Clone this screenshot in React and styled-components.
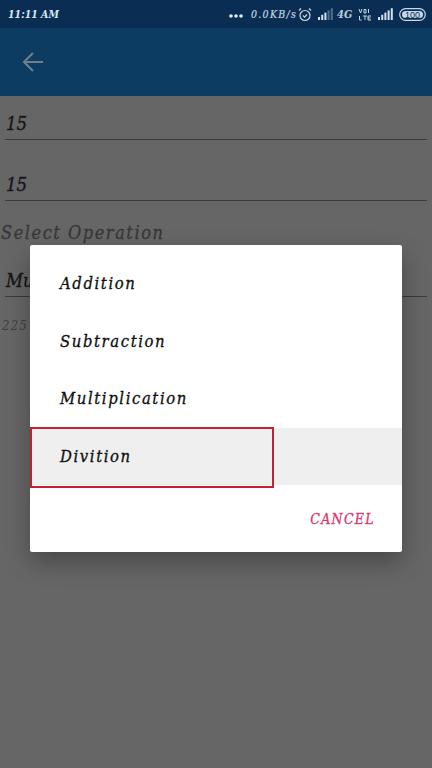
import React from "react";
import styled, { createGlobalStyle } from "styled-components";

const Global = createGlobalStyle`
  html, body { margin: 0; padding: 0; background: #666; }
  body { font-family: "DejaVu Serif Condensed", "DejaVu Serif", "Liberation Serif", serif; font-style: italic; }
`;
const Screen = styled.div`
  position: relative; width: 432px; height: 768px; overflow: hidden; background: #666666;
`;
const StatusBar = styled.div`
  height: 28px; background: #0a2d53; display: flex; align-items: center;
  justify-content: space-between; padding: 0 6px 0 8px; box-sizing: border-box;
`;
const Time = styled.span`
  font-size: 10.5px; letter-spacing: 0px; color: #dce8f2; font-weight: bold;
`;
const StatusRight = styled.div`
  display: flex; align-items: center;
`;
const Speed = styled.span`
  font-size: 10.5px; letter-spacing: 1.3px; color: #c3d3e2; -webkit-text-stroke: 0.2px #c3d3e2;
  margin: 0 3px 0 8px; width: 44px; white-space: nowrap;
`;
const NetLabel = styled.span`
  font-size: 11px; font-weight: bold; color: #b9cbdc; margin: 0 8px 0 3px; width: 13px;
`;
const AppBar = styled.div`
  height: 68px; background: #0d3c62; display: flex; align-items: center; padding-left: 22px;
`;
const Content = styled.div`
  display: flex; flex-direction: column; padding: 0 5px;
`;
const Field = styled.div`
  height: ${p => p.$h}px; box-sizing: border-box; border-bottom: 1px solid #3a3a3a;
  display: flex; align-items: flex-end; padding: 0 0 3px 1px;
  font-size: 18.5px; line-height: 24px; color: #161616; -webkit-text-stroke: 0.35px #161616;
`;
const Label = styled.div`
  margin: 20px 0 0 -4px; font-size: 18px; line-height: 24px; letter-spacing: 1.55px; color: #383838;
  -webkit-text-stroke: 0.3px #383838;
`;
const Result = styled.div`
  margin: 20px 0 0 -3px; font-size: 13px; line-height: 18px; letter-spacing: 1.2px; color: #3f3f3f;
`;
const Dialog = styled.div`
  position: absolute; left: 30px; top: 245px; width: 372px; height: 307px; background: #fff;
  border-radius: 2px; box-shadow: 0 10px 24px rgba(0,0,0,.3);
  display: flex; flex-direction: column; padding-top: 10px; box-sizing: border-box;
`;
const Item = styled.div`
  height: 57.5px; display: flex; align-items: center; padding-left: 30px; font-size: 16.5px;
  letter-spacing: 1.6px; color: #111; -webkit-text-stroke: 0.3px #111;
  background: ${p => (p.$active ? "#efefef" : "transparent")};
`;
const Marker = styled.div`
  position: absolute; left: 0; top: 182px; width: 244px; height: 61px; box-sizing: border-box;
  border: 2px solid #c5202f;
`;
const Actions = styled.div`
  display: flex; justify-content: flex-end; padding: 24px 27px 0 0;
`;
const Cancel = styled.span`
  font-size: 14px; line-height: 20px; letter-spacing: 1.3px; color: #d9376e; -webkit-text-stroke: 0.3px #d9376e;
`;

const Alarm = () => (
  <svg width="14" height="15" viewBox="0 0 14 15" fill="none" stroke="#c8d8e6" strokeWidth="1.2">
    <circle cx="7" cy="8.500" r="5" />
    <path d="M5 8.500l1.600 1.600 2.400-2.600M1 3.500l2-2M13 3.500l-2-2" />
  </svg>
);
const Bars = ({ on = 5, ml = 0 }) => (
  <svg width="16" height="12" viewBox="0 0 16 12" style={{ marginLeft: ml }}>
    {[0, 1, 2, 3, 4].map(i => (
      <rect key={i} x={i * 3.2} y={9 - i * 2.2} width="2" height={3 + i * 2.2} fill={i < on ? "#d5e2ee" : "#51708c"} />
    ))}
  </svg>
);
const Volte = () => (
  <svg width="14" height="13" viewBox="0 0 14 13" fill="none" stroke="#c8d8e6" strokeWidth="1">
    <path d="M1 1l1.500 4L4 1M6 1.500h2v3.500H6zM10.500 1v4M1.500 8v4h2M5 8h4M7 8v4M13 8h-3v4h3M10 10h2.500" />
  </svg>
);
const Battery = () => (
  <svg width="27" height="13" viewBox="0 0 27 13" style={{ marginLeft: 5 }}>
    <rect x="0.700" y="0.700" width="25.600" height="11.600" rx="5.800" fill="#0a2d53" stroke="#c8d8e6" strokeWidth="1.200" />
    <rect x="3" y="3" width="21" height="7" rx="3.500" fill="#c8d8e6" />
    <text x="13.500" y="9.600" textAnchor="middle" fontSize="9" fontFamily="Liberation Sans" fontStyle="normal" fill="#0a2d53">100</text>
  </svg>
);
const Dots = () => (
  <svg width="14" height="4" viewBox="0 0 14 4" fill="#e2ecf4" style={{ marginTop: 3 }}>
    <circle cx="2" cy="2" r="1.800" /><circle cx="7" cy="2" r="1.800" /><circle cx="12" cy="2" r="1.800" />
  </svg>
);
const BackArrow = () => (
  <svg width="22" height="22" viewBox="0 0 22 22" fill="none" stroke="#6f7f8c" strokeWidth="2">
    <path d="M21 11H2M11 2l-9 9 9 9" />
  </svg>
);

export default function App() {
  return (
    <Screen>
      <Global />
      <StatusBar>
        <Time>11:11 AM</Time>
        <StatusRight>
          <Dots />
          <Speed>0.0KB/s</Speed>
          <Alarm />
          <Bars on={3} ml={6} />
          <NetLabel>4G</NetLabel>
          <Volte />
          <Bars ml={6} />
          <Battery />
        </StatusRight>
      </StatusBar>
      <AppBar><BackArrow /></AppBar>
      <Content>
        <Field $h={44}>15</Field>
        <Field $h={61}>15</Field>
        <Label>Select Operation</Label>
        <Field $h={52}>Multiplication</Field>
        <Result>225</Result>
      </Content>
      <Dialog>
        <Item>Addition</Item>
        <Item>Subtraction</Item>
        <Item>Multiplication</Item>
        <Item $active>Divition</Item>
        <Marker />
        <Actions><Cancel>CANCEL</Cancel></Actions>
      </Dialog>
    </Screen>
  );
}
